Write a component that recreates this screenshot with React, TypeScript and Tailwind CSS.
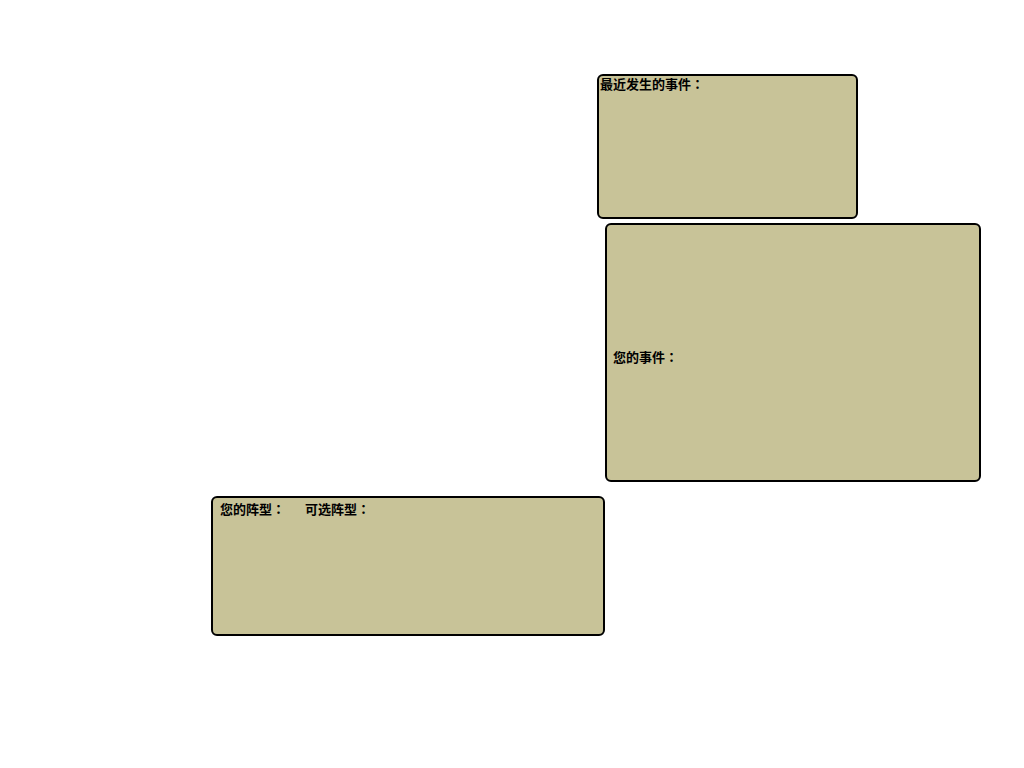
const Colon = () => (
  <span style={{ fontFamily: '"Noto Sans CJK JP", sans-serif' }}>：</span>
);

export default function App() {
  const font = { fontFamily: '"Noto Sans CJK SC", "Noto Sans", sans-serif' };
  return (
    <div className="w-[1024px] h-[768px] bg-white text-black" style={font}>
      <div className="flex flex-col pt-[74px]">
        {/* recent events */}
        <div className="ml-[597px] w-[261px] h-[145px] border-2 border-black rounded-[6px] bg-[#c8c398] px-[1px] text-[13px] font-bold leading-[16px]">
          最近发生的事件<Colon />
        </div>

        {/* your events */}
        <div className="ml-[605px] mt-[4px] w-[376px] h-[259px] border-2 border-black rounded-[6px] bg-[#c8c398] flex items-center px-[6px] pt-[9px] text-[13px] font-bold leading-[16px]">
          <span>
            您的事件<Colon />
          </span>
        </div>

        {/* formation */}
        <div className="ml-[211px] mt-[14px] w-[394px] h-[140px] border-2 border-black rounded-[6px] bg-[#c8c398] flex items-start gap-[20px] px-[7px] pt-[3px] text-[13px] font-bold leading-[16px]">
          <span>
            您的阵型<Colon />
          </span>
          <span>
            可选阵型<Colon />
          </span>
        </div>
      </div>
    </div>
  );
}
